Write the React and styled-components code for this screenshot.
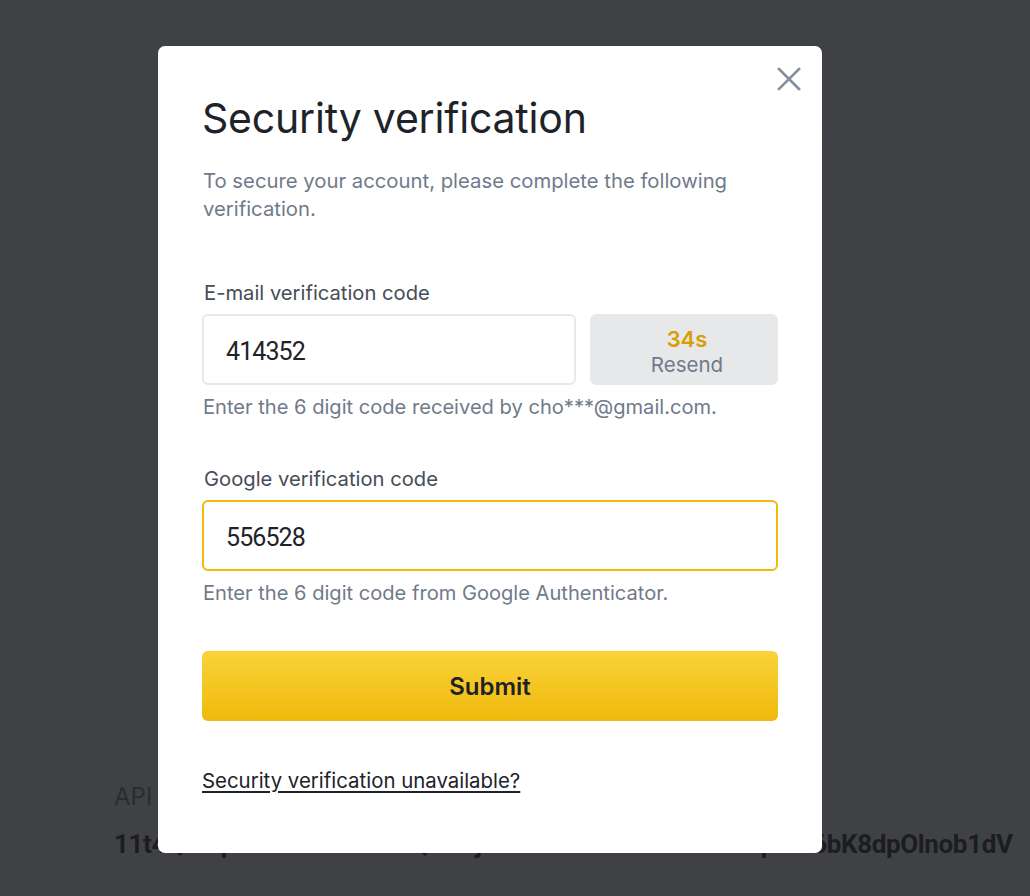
import React from "react";
import styled, { createGlobalStyle } from "styled-components";

const GlobalStyle = createGlobalStyle`
  * { box-sizing: border-box; }
  html, body { margin: 0; padding: 0; height: 100%; }
  body {
    font-family: Inter, "Noto Sans", "Liberation Sans", sans-serif;
    background: #fafafa;
    overflow: hidden;
  }
`;

// page behind the dialog
const Page = styled.div`
  width: 1030px;
  height: 896px;
  display: flex;
  flex-direction: column;
`;

const HeaderBand = styled.div`
  height: 243px;
  background: #ffffff;
  display: flex;
  flex-direction: column;
`;

const HeaderRow = styled.div`
  height: ${({ h }) => h}px;
  border-bottom: 1px solid #eaecef;
`;

const Card = styled.div`
  height: 467px;
  background: #fdfdfd;
  display: flex;
  flex-direction: column;
`;

const CardRow = styled.div`
  flex: ${({ grow }) => grow};
  border-bottom: 1px solid #eef0f2;
`;

const ApiBlock = styled.div`
  padding: 73px 0 0 114px;
  display: flex;
  flex-direction: column;
  gap: 18px;
`;

const ApiLabel = styled.div`
  font-size: 24px;
  color: #707a8a;
  line-height: 28px;
`;

const ApiKey = styled.div`
  font-family: Roboto, "Liberation Sans", sans-serif;
  font-weight: 700;
  font-size: 26px;
  color: #1e2329;
  white-space: nowrap;
  letter-spacing: -0.37px;
`;

// dialog layer
const Overlay = styled.div`
  position: fixed;
  inset: 0;
  background: rgba(28, 29, 33, 0.84);
  display: flex;
  align-items: flex-start;
  padding: 46px 0 0 158px;
`;

const Dialog = styled.div`
  position: relative;
  width: 664px;
  height: 807px;
  background: #ffffff;
  border-radius: 7px;
  padding: 48px 44px 0 44px;
  display: flex;
  flex-direction: column;
`;

const CloseButton = styled.button`
  position: absolute;
  top: 20px;
  right: 20px;
  width: 26px;
  height: 26px;
  padding: 0;
  border: none;
  background: none;
  cursor: pointer;
  display: flex;
  align-items: center;
  justify-content: center;
`;

const Title = styled.h1`
  margin: 0;
  font-size: 41px;
  font-weight: 400;
  line-height: 48px;
  color: #1e2329;
  letter-spacing: -0.2px;
`;

const Subtitle = styled.p`
  margin: 25px 0 0 1px;
  font-size: 20.3px;
  line-height: 28px;
  color: #707a8a;
`;

const Field = styled.div`
  display: flex;
  flex-direction: column;
  margin-top: ${({ top }) => top}px;
`;

const Label = styled.label`
  font-size: 20.2px;
  line-height: 26px;
  color: #474d57;
  margin: 0 0 8px 2px;
`;

const InputRow = styled.div`
  display: flex;
  gap: 14px;
`;

const CodeInput = styled.div`
  flex: 1;
  height: 71px;
  border: 2px solid ${({ active }) => (active ? "#f0b90b" : "#e6e8ea")};
  border-radius: 6px;
  display: flex;
  align-items: center;
  padding: 3px 0 0 22px;
  font-family: Roboto, "Liberation Sans", sans-serif;
  font-size: 25px;
  letter-spacing: -0.9px;
  color: #1e2329;
`;

const ResendButton = styled.button`
  width: 188px;
  height: 71px;
  border: none;
  border-radius: 6px;
  background: #e6e8ea;
  display: flex;
  flex-direction: column;
  align-items: center;
  justify-content: center;
  gap: 2px;
  padding: 4px 0 0 6px;
  font-family: inherit;
  cursor: pointer;
`;

const Countdown = styled.span`
  font-size: 22px;
  font-weight: 600;
  line-height: 24px;
  color: #d89f00;
`;

const ResendText = styled.span`
  font-size: 20.5px;
  line-height: 24px;
  color: #707a8a;
`;

const Hint = styled.div`
  margin: 9px 0 0 1px;
  font-size: 20.1px;
  line-height: 26px;
  color: #707a8a;
`;

const SubmitButton = styled.button`
  margin-top: 45px;
  height: 70px;
  width: 100%;
  border: none;
  border-radius: 6px;
  background: linear-gradient(180deg, #f8d33a 0%, #f0b90b 100%);
  font-family: inherit;
  font-size: 24px;
  font-weight: 600;
  color: #1e2329;
  cursor: pointer;
`;

const HelpLink = styled.a`
  margin-top: 47px;
  align-self: flex-start;
  font-size: 20.4px;
  line-height: 26px;
  color: #1e2329;
  text-decoration: underline;
  text-underline-offset: 3px;
  cursor: pointer;
`;

const CloseIcon = () => (
  <svg width="24" height="24" viewBox="0 0 24 24" fill="none">
    <path d="M2 2L22 22M22 2L2 22" stroke="#848e9c" strokeWidth="2.6" strokeLinecap="square" />
  </svg>
);

export default function App() {
  return (
    <>
      <GlobalStyle />
      <Page>
        <HeaderBand>
          <HeaderRow h={63} />
          <HeaderRow h={70} />
        </HeaderBand>
        <Card>
          <CardRow grow={267} />
          <CardRow grow={200} />
        </Card>
        <ApiBlock>
          <ApiLabel>API Key</ApiLabel>
          <ApiKey>11t4Qo6qtuKnoKVdcdKdzQ1KRjY6b1dKNKoVh6o7o6oKqD7o6bK8dpOlnob1dV</ApiKey>
        </ApiBlock>
      </Page>

      <Overlay>
        <Dialog>
          <CloseButton aria-label="Close">
            <CloseIcon />
          </CloseButton>
          <Title>Security verification</Title>
          <Subtitle>
            To secure your account, please complete the following verification.
          </Subtitle>

          <Field top={57}>
            <Label>E-mail verification code</Label>
            <InputRow>
              <CodeInput>414352</CodeInput>
              <ResendButton>
                <Countdown>34s</Countdown>
                <ResendText>Resend</ResendText>
              </ResendButton>
            </InputRow>
            <Hint>Enter the 6 digit code received by cho***@gmail.com.</Hint>
          </Field>

          <Field top={46}>
            <Label>Google verification code</Label>
            <InputRow>
              <CodeInput active>556528</CodeInput>
            </InputRow>
            <Hint>Enter the 6 digit code from Google Authenticator.</Hint>
          </Field>

          <SubmitButton>Submit</SubmitButton>
          <HelpLink>Security verification unavailable?</HelpLink>
        </Dialog>
      </Overlay>
    </>
  );
}
